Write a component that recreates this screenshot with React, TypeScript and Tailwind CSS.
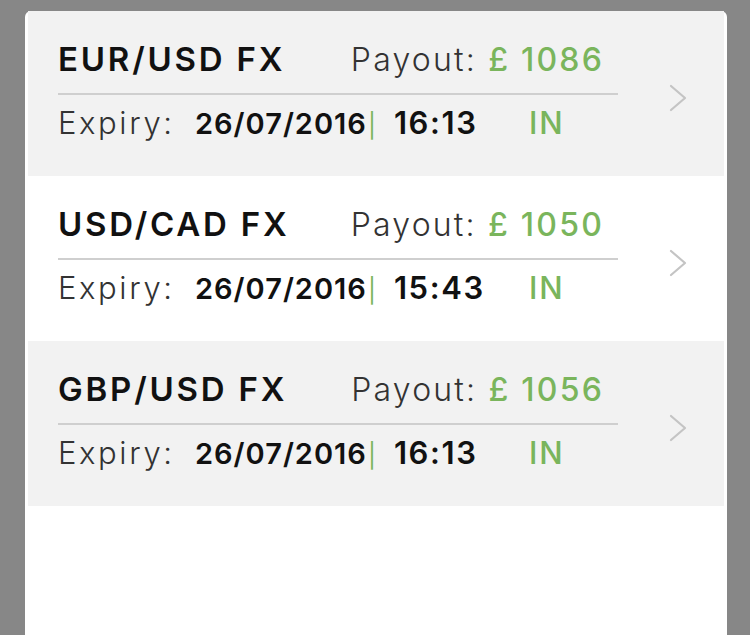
type Trade = {
  pair: string;
  payout: number;
  date: string;
  time: string;
  status: string;
};

const trades: Trade[] = [
  { pair: "EUR/USD FX", payout: 1086, date: "26/07/2016", time: "16:13", status: "IN" },
  { pair: "USD/CAD FX", payout: 1050, date: "26/07/2016", time: "15:43", status: "IN" },
  { pair: "GBP/USD FX", payout: 1056, date: "26/07/2016", time: "16:13", status: "IN" },
];

const Chevron = () => (
  <svg width="20" height="28" viewBox="0 0 20 28" className="ml-[50px] mt-[10px]">
    <polyline
      points="3,2 17,14 3,26"
      fill="none"
      stroke="#c4c4c4"
      strokeWidth="2.2"
      strokeLinecap="round"
      strokeLinejoin="round"
    />
  </svg>
);

const TradeRow = ({ trade, shaded }: { trade: Trade; shaded: boolean }) => {
  return (
    <div
      className={`flex h-[165px] items-center pb-[2px] pl-[30px] ${
        shaded ? "bg-[#f2f2f2]" : "bg-white"
      }`}
    >
      <div className="w-[560px]">
        <div className="flex items-baseline justify-between pr-[14px]">
          <span className="text-[33px] font-semibold leading-[40px] tracking-[2.8px] text-[#111]">
            {trade.pair}
          </span>
          <span className="text-[32px] leading-[40px] tracking-[2.2px]">
            <span className="font-light text-[#333]">Payout: </span>
            <span className="font-medium text-[#7ab55c]">£ {trade.payout}</span>
          </span>
        </div>
        <div className="mt-[13px] h-[2px] bg-[#cfcfcf]" />
        <div className="mt-[8px] flex items-baseline text-[31px] leading-[40px]">
          <span className="w-[137px] font-light tracking-[2.6px] text-[#333]">Expiry:</span>
          <span className="text-[29px] font-semibold tracking-[1px] text-[#111]">
            {trade.date}
          </span>
          <span className="ml-[1px] text-[24px] font-normal text-[#7ab55c]">|</span>
          <span className="ml-[18px] w-[135px] font-semibold tracking-[1.6px] text-[#111]">
            {trade.time}
          </span>
          <span className="font-medium tracking-[2px] text-[#7ab55c]">{trade.status}</span>
        </div>
      </div>
      <Chevron />
    </div>
  );
};

export default function App() {
  return (
    <div
      className="flex h-[635px] w-[750px] flex-col bg-[#878787] pl-[25px] pr-[23px] pt-[11px]"
      style={{ fontFamily: "Inter, 'Noto Sans', sans-serif" }}
    >
      <div className="flex-1 rounded-t-md bg-white px-[3px]">
        {trades.map((t, i) => (
          <TradeRow key={t.pair} trade={t} shaded={i % 2 === 0} />
        ))}
      </div>
    </div>
  );
}
